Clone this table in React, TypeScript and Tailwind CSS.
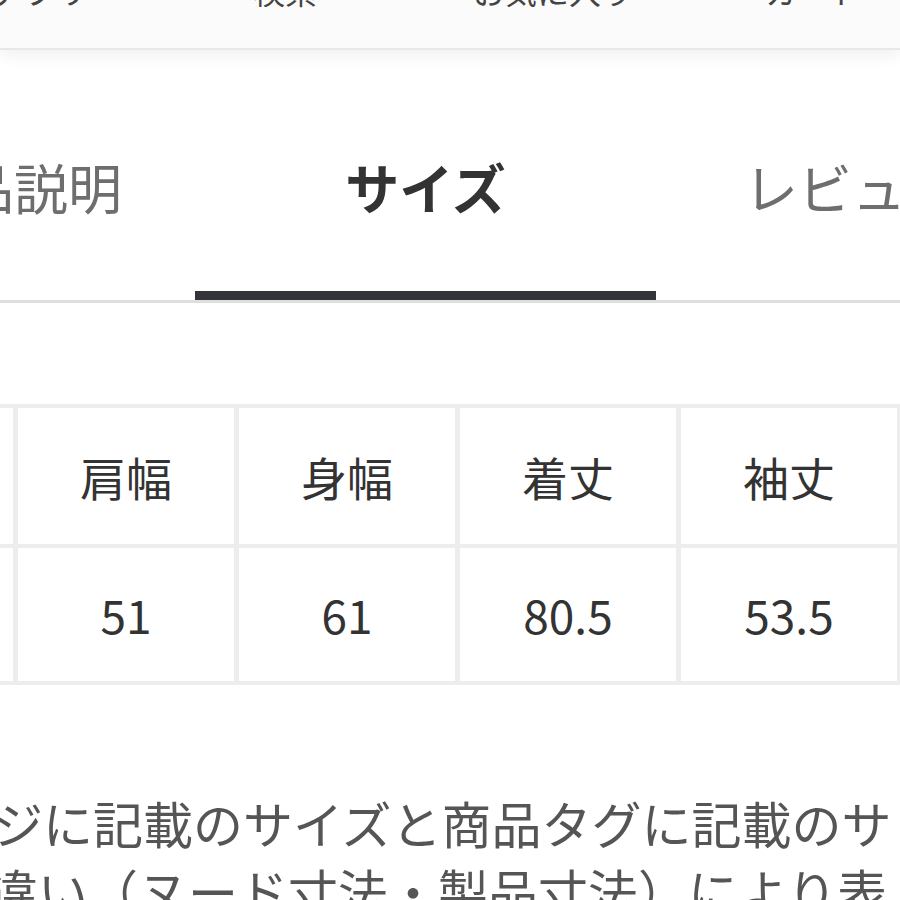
const navItems = [
  { label: "アプリ", w: "w-[96px]", ml: "ml-[-8px]" },
  { label: "検索", w: "w-[64px]", ml: "ml-[165px]" },
  { label: "お気に入り", w: "w-[160px]", ml: "ml-[156px]" },
  { label: "カート", w: "w-[96px]", ml: "ml-[132px]" },
];

const headers = ["サイズ", "肩幅", "身幅", "着丈", "袖丈"];
const values = ["F", "51", "61", "80.5", "53.5"];

function Header() {
  return (
    <header className="relative z-10 h-[50px] overflow-hidden border-b-2 border-[#e8e8e8] bg-[#fbfbfb] shadow-[0_6px_16px_rgba(0,0,0,0.06)]">
      <div className="mt-[-26px] flex text-[32px] leading-[32px] text-[#444]">
        {navItems.map((item) => (
          <span key={item.label} className={`${item.w} ${item.ml} shrink-0 whitespace-nowrap text-center`}>
            {item.label}
          </span>
        ))}
      </div>
    </header>
  );
}

function Tabs() {
  return (
    <div className="overflow-hidden border-b-[3px] border-[#dedede]">
      <div className="ml-[-266px] flex text-[54px] leading-[54px]">
        <div className="flex w-[461px] shrink-0 flex-col">
          <div className="pt-[110px] pr-[73px] text-right whitespace-nowrap text-[#6e6e6e]">商品説明</div>
          <div className="mt-[77px] h-[9px]" />
        </div>
        <div className="flex w-[461px] shrink-0 flex-col">
          <div className="pt-[110px] text-center font-bold whitespace-nowrap text-[#333]">サイズ</div>
          <div className="mt-[77px] h-[9px] bg-[#333438]" />
        </div>
        <div className="flex w-[461px] shrink-0 flex-col">
          <div className="pt-[110px] pl-[88px] whitespace-nowrap text-[#6e6e6e]">レビュー</div>
          <div className="mt-[77px] h-[9px]" />
        </div>
      </div>
    </div>
  );
}

function SizeTable() {
  return (
    <div className="mt-[101px] overflow-hidden">
      <div className="ml-[-207px] grid w-max grid-cols-[repeat(5,216px)] gap-x-[5px] gap-y-[4px] bg-[#ededed] p-[4px] text-[46px] text-[#333]">
        {headers.map((h) => (
          <div key={h} className="flex h-[136px] items-center justify-center bg-white">
            {h}
          </div>
        ))}
        {values.map((v, i) => (
          <div key={i} className="flex h-[133px] items-center justify-center bg-white">
            {v}
          </div>
        ))}
      </div>
    </div>
  );
}

export default function App() {
  return (
    <div
      className="h-[900px] w-[900px] overflow-hidden bg-white"
      style={{ fontFamily: '"Noto Sans CJK JP", "Noto Sans", sans-serif' }}
    >
      <Header />
      <Tabs />
      <SizeTable />
      <div className="mt-[103px] overflow-hidden text-[50px] leading-[68px] text-[#555]">
        <p className="ml-[-106px] whitespace-nowrap">ページに記載のサイズと商品タグに記載のサ</p>
        <p className="ml-[-62px] whitespace-nowrap">の違い（ヌード寸法・製品寸法）により表</p>
      </div>
    </div>
  );
}
